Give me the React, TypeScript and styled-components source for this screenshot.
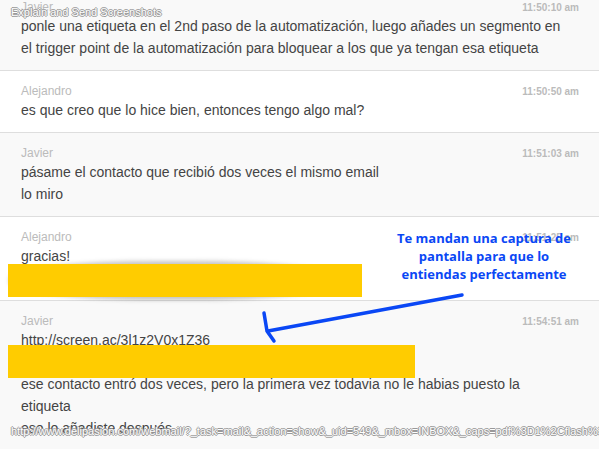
import React from "react";
import styled, { createGlobalStyle } from "styled-components";

// Page-wide reset and base font
const GlobalStyle = createGlobalStyle`
  body {
    margin: 0;
    background: #fff;
    font-family: "Liberation Sans", Arial, sans-serif;
    overflow: hidden;
  }
`;

const Page = styled.div`
  position: relative;
  width: 599px;
  height: 449px;
  overflow: hidden;
`;

const Thread = styled.div`
  margin-top: -13px;
`;

const Message = styled.div<{ $shade: boolean }>`
  background: ${(p) => (p.$shade ? "#f9f9f9" : "#fff")};
  border-bottom: 1px solid #dedede;
  padding: 12px 20px 11px 21px;
`;

const Head = styled.div`
  display: flex;
  justify-content: space-between;
  align-items: baseline;
  height: 16px;
  line-height: 16px;
`;

const Author = styled.span`
  font-size: 12px;
  color: #bbb;
`;

const Time = styled.span`
  font-size: 10px;
  font-weight: bold;
  color: #bbb;
`;

const Line = styled.div`
  font-size: 14px;
  line-height: 22px;
  color: #444;
  white-space: nowrap;
`;

const Media = styled.div`
  position: relative;
  height: 22px;
`;

// Yellow redaction box laid over the attachment line
const Redaction = styled.div<{ $top: number; $width: number }>`
  position: absolute;
  left: -13px;
  top: ${(p) => p.$top}px;
  width: ${(p) => p.$width}px;
  height: 33px;
  background: #ffcc00;
  z-index: 2;
`;

// Blurred thumbnail peeking out round the redaction
const Smudge = styled.div`
  position: absolute;
  left: -12px;
  top: -6px;
  width: 330px;
  height: 39px;
  border-radius: 45%;
  background: rgba(90, 90, 90, 0.35);
  filter: blur(2px);
  z-index: 1;
`;

const Overlay = styled.div<{ $top: number }>`
  position: absolute;
  left: 11px;
  top: ${(p) => p.$top}px;
  font-size: 11px;
  color: #fff;
  white-space: nowrap;
  text-shadow: -1px 0 #999, 1px 0 #999, 0 -1px #999, 0 1px #999;
  z-index: 5;
`;

const Callout = styled.div`
  position: absolute;
  left: 379px;
  top: 229px;
  width: 210px;
  text-align: center;
  font-family: "Open Sans", "DejaVu Sans", sans-serif;
  font-weight: bold;
  font-size: 13px;
  line-height: 18px;
  color: #0a47f5;
  z-index: 4;
`;

const Arrow = styled.svg`
  position: absolute;
  left: 0;
  top: 0;
  width: 599px;
  height: 449px;
  pointer-events: none;
  z-index: 4;
`;

type Msg = {
  author: string;
  time: string;
  lines: string[];
  media?: { top: number; width: number; smudge?: boolean };
  after?: string[];
};

const messages: Msg[] = [
  {
    author: "Javier",
    time: "11:50:10 am",
    lines: [
      "ponle una etiqueta en el 2nd paso de la automatización, luego añades un segmento en",
      "el trigger point de la automatización para bloquear a los que ya tengan esa etiqueta",
    ],
  },
  {
    author: "Alejandro",
    time: "11:50:50 am",
    lines: ["es que creo que lo hice bien, entonces tengo algo mal?"],
  },
  {
    author: "Javier",
    time: "11:51:03 am",
    lines: ["pásame el contacto que recibió dos veces el mismo email", "lo miro"],
  },
  {
    author: "Alejandro",
    time: "11:51:25 am",
    lines: ["gracias!"],
    media: { top: -3, width: 354, smudge: true },
  },
  {
    author: "Javier",
    time: "11:54:51 am",
    lines: ["http://screen.ac/3l1z2V0x1Z36"],
    media: { top: -6, width: 407 },
    after: [
      "ese contacto entró dos veces, pero la primera vez todavia no le habias puesto la",
      "etiqueta",
      "eso lo añadiste después",
    ],
  },
];

const App = () => (
  <Page>
    <GlobalStyle />
    <Thread>
      {messages.map((m, i) => (
        <Message key={i} $shade={i % 2 === 0}>
          <Head>
            <Author>{m.author}</Author>
            <Time>{m.time}</Time>
          </Head>
          {m.lines.map((l, j) => (
            <Line key={j}>{l}</Line>
          ))}
          {m.media && (
            <Media>
              {m.media.smudge && <Smudge />}
              <Redaction $top={m.media.top} $width={m.media.width} />
            </Media>
          )}
          {m.after?.map((l, j) => (
            <Line key={j}>{l}</Line>
          ))}
        </Message>
      ))}
    </Thread>

    <Overlay $top={6}>Explain and Send Screenshots</Overlay>
    <Overlay $top={425}>
      http://www.delipasion.com/webmail/?_task=mail&amp;_action=show&amp;_uid=549&amp;_mbox=INBOX&amp;_caps=pdf%3D1%2Cflash%3D1
    </Overlay>

    <Callout>
      Te mandan una captura de
      <br />
      pantalla para que lo
      <br />
      entiendas perfectamente
    </Callout>

    <Arrow viewBox="0 0 599 449">
      <g stroke="#0a47f5" strokeWidth={3.5} strokeLinecap="round" fill="none">
        <line x1={462} y1={295} x2={268} y2={331} />
        <polyline points="264,313 267,331 274,341" />
      </g>
    </Arrow>
  </Page>
);

export default App;
